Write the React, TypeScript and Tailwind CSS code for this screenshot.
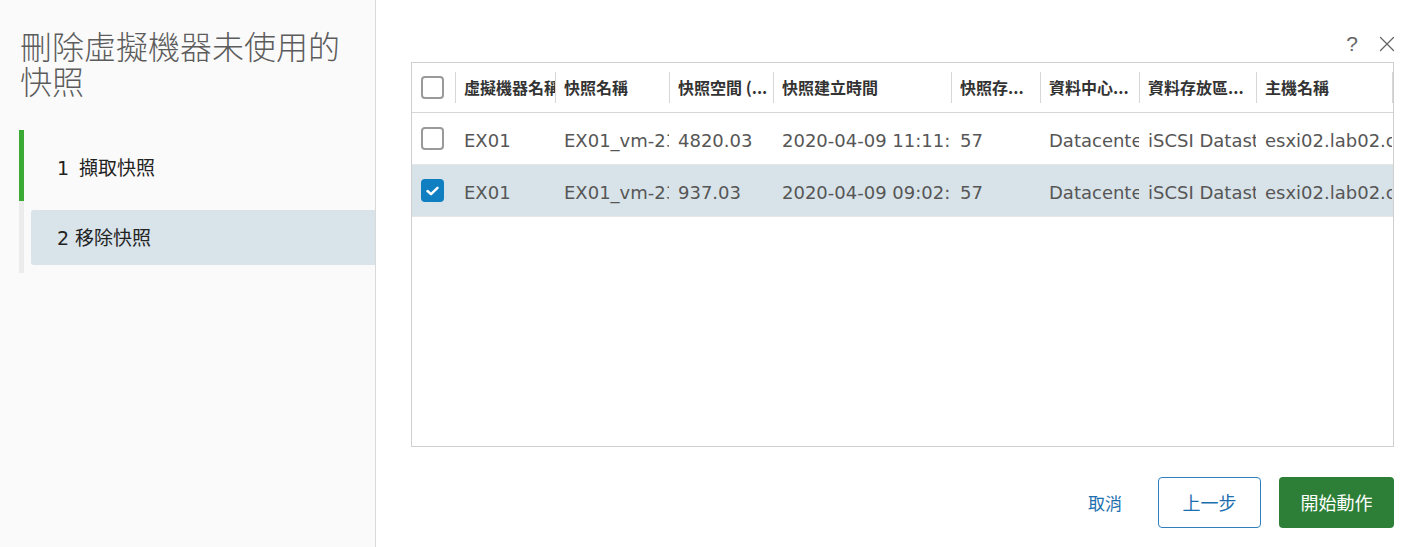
import { X } from "lucide-react";

const cjk = '"DejaVu Sans", "Noto Sans CJK TC", sans-serif';

const columns = [
  { label: "虛擬機器名稱", width: 100 },
  { label: "快照名稱", width: 114 },
  { label: "快照空間 (...", width: 104 },
  { label: "快照建立時間", width: 178 },
  { label: "快照存...", width: 89 },
  { label: "資料中心...", width: 99 },
  { label: "資料存放區...", width: 117 },
  { label: "主機名稱", width: 136 },
];

const rows = [
  {
    checked: false,
    cells: ["EX01", "EX01_vm-23", "4820.03", "2020-04-09 11:11:35", "57", "Datacenter", "iSCSI Datastore", "esxi02.lab02.com"],
  },
  {
    checked: true,
    cells: ["EX01", "EX01_vm-23", "937.03", "2020-04-09 09:02:11", "57", "Datacenter", "iSCSI Datastore", "esxi02.lab02.com"],
  },
];

function Checkbox({ checked }: { checked: boolean }) {
  if (checked) {
    return (
      <div className="w-[23px] h-[23px] rounded-[4px] bg-[#0f7fc2] flex items-center justify-center">
        <svg width="13" height="10" viewBox="0 0 13 10" fill="none">
          <path d="M1.5 5 L5 8.2 L11.5 1.8" stroke="white" strokeWidth="2.4" strokeLinecap="round" strokeLinejoin="round" />
        </svg>
      </div>
    );
  }
  return <div className="w-[23px] h-[23px] rounded-[4px] border-2 border-[#9a9a9a] bg-white" />;
}

export default function App() {
  return (
    <div className="w-[1417px] h-[547px] flex bg-white overflow-hidden" style={{ fontFamily: cjk }}>
      {/* Sidebar */}
      <div className="w-[376px] shrink-0 bg-[#fafafa] border-r border-[#d9d9d9] pt-[28px]">
        <h1
          className="pl-[20px] pr-[20px] text-[32px] leading-[35px] text-[#5c5c5c] font-light"
          style={{ fontFamily: '"Noto Sans CJK TC", sans-serif' }}
        >
          刪除虛擬機器未使用的
          <br />
          快照
        </h1>

        <div className="mt-[32px] ml-[19px]">
          <div className="border-l-[5px] border-[#3aaa35] h-[71px] flex items-center pt-[6px] pl-[33px] text-[19px] text-[#222]">
            <span className="mr-[10px]">1</span>擷取快照
          </div>
          <div className="border-l-[5px] border-[#ececec] pt-[9px] pb-[8px]">
            <div className="ml-[7px] h-[55px] rounded-l-[3px] bg-[#d8e3ea] flex items-center pt-[2px] pl-[26px] text-[19px] text-[#222]">
              <span className="mr-[6px]">2</span>移除快照
            </div>
          </div>
        </div>
      </div>

      {/* Main */}
      <div className="flex-1 flex flex-col pl-[35px] pr-[24px]">
        <div className="h-[62px] flex items-end justify-end pb-[5px] gap-[16px] text-[#666]">
          <span className="text-[21px] leading-none pb-[3px]" style={{ fontFamily: '"Liberation Sans", sans-serif' }}>?</span>
          <X size={26} strokeWidth={1.2} className="mr-[-6px]" />
        </div>

        <div className="h-[385px] border border-[#cfcfcf] overflow-hidden">
          {/* Header */}
          <div className="flex h-[50px] border-b border-[#d6d6d6] items-center">
            <div className="w-[43px] shrink-0 flex items-center pl-[9px] h-full">
              <Checkbox checked={false} />
            </div>
            {columns.map((c, i) => (
              <div key={i} className="shrink-0 h-full flex items-center relative" style={{ width: c.width }}>
                <div className="absolute left-0 top-[9px] bottom-[9px] w-px bg-[#d6d6d6]" />
                <span
                  className="pl-[9px] pb-[2px] overflow-hidden whitespace-nowrap text-[16px] font-bold text-[#333]"
                  style={{ fontFamily: '"Noto Sans CJK TC", sans-serif' }}
                >
                  {c.label}
                </span>
              </div>
            ))}
            <div className="w-px self-stretch my-[9px] bg-[#d6d6d6]" />
          </div>

          {rows.map((r, ri) => (
            <div
              key={ri}
              className={`flex h-[52px] items-center border-b border-[#e6e6e6] ${r.checked ? "bg-[#d8e3e9]" : "bg-white"}`}
            >
              <div className="w-[43px] shrink-0 flex items-center pl-[9px]">
                <Checkbox checked={r.checked} />
              </div>
              {r.cells.map((cell, ci) => (
                <div
                  key={ci}
                  className="shrink-0 overflow-hidden whitespace-nowrap pl-[9px] pt-[3px] text-[18px] text-[#565656]"
                  style={{ width: columns[ci].width }}
                >
                  {cell}
                </div>
              ))}
            </div>
          ))}
        </div>

        <div className="flex justify-end items-center gap-[18px] mt-[30px]">
          <button className="h-[51px] px-[18px] text-[17px] text-[#1b6fae]" style={{ fontFamily: '"Noto Sans CJK TC", sans-serif' }}>
            取消
          </button>
          <button
            className="h-[51px] w-[103px] rounded-[4px] border-[1.5px] border-[#2f7fbd] text-[18px] text-[#1b6fae] bg-white"
            style={{ fontFamily: '"Noto Sans CJK TC", sans-serif' }}
          >
            上一步
          </button>
          <button
            className="h-[51px] w-[115px] rounded-[4px] bg-[#2d7f37] text-[18px] text-white"
            style={{ fontFamily: '"Noto Sans CJK TC", sans-serif' }}
          >
            開始動作
          </button>
        </div>
      </div>
    </div>
  );
}
